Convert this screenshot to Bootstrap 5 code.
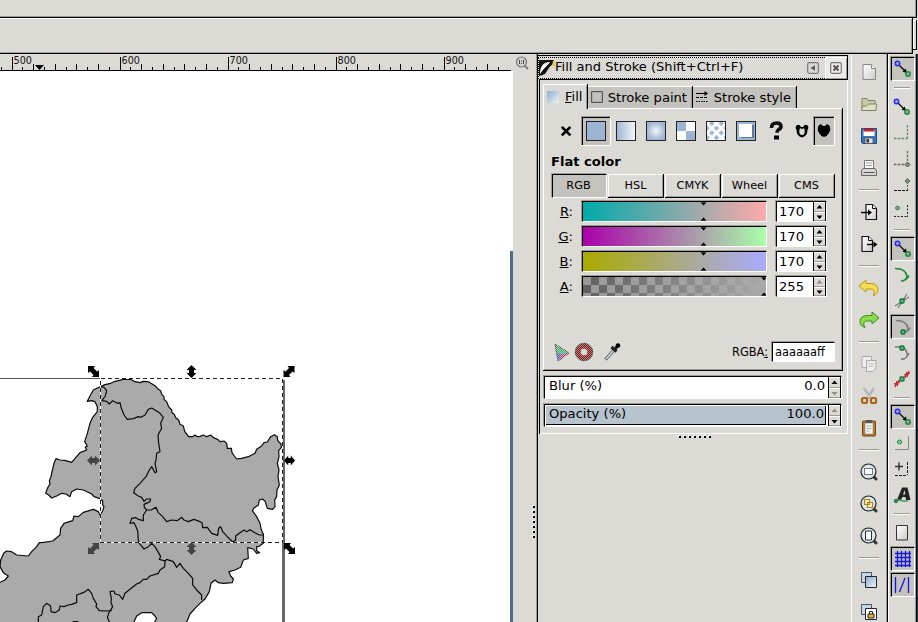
<!DOCTYPE html>
<html lang="en">
<head>
<meta charset="utf-8">
<title>Fill and Stroke</title>
<link href="https://cdn.jsdelivr.net/npm/bootstrap@5.3.0/dist/css/bootstrap.min.css" rel="stylesheet">
<style>
:root{--face:#dcdad5;--press:#c4c2bd;--dk:#9c9a91}
body{width:918px;height:622px;overflow:hidden;background:var(--face);color:#000;font:13.1px/16px "DejaVu Sans",sans-serif;white-space:nowrap}
svg{display:block;flex:none}
.menu-strip{height:18px;width:917px;border-bottom:1px solid #000;border-right:1px solid #000;box-shadow:inset -1px -1px var(--dk)}
.tool-strip{height:36px}
.tool-main{width:913px;border:solid #000;border-width:0 1px 1px 0;box-shadow:inset 0 1px #fff,inset -1px -1px var(--dk)}
.tool-end{width:4px;height:30px;margin-top:2px;border:solid #000;border-width:0 1px 1px 0;box-shadow:inset 1px 1px #fff}
.main-row{height:568px}
.main-row>*{flex:none}
.canvas-col{width:513px}
.gutter{width:23px}
.grip-v{margin:435px 0 0 19px}
.dock{width:313px;border-left:1px solid var(--dk);box-shadow:inset 1px 0 #000}
.dock-title{height:24px;margin:1px 0 0 1px;width:310px;border:solid #000;border-width:1px 1px 0 0;padding-top:1px}
.dots{border:1px dotted #000;border-width:1px 0 1px 1px;background:var(--face);height:22px}
.title-t{padding-bottom:2px;font-size:13.05px}
.title-back{margin-right:6px}
.close-b{width:22px;height:22px;background:#eeebe7;box-shadow:inset 1px 1px #fff,inset -1px -1px var(--dk);padding-right:1px}
.frame-in{margin-left:2px;width:309px;height:355px;border:solid #000;border-width:1px 0 0 1px;box-shadow:inset -1px -1px #fff;padding:4px 0 0 3px}
.tab-row{height:24px}
.tab-x{background:var(--press);height:22px;border-right:1px solid #000;box-shadow:inset 0 1px #fff,inset -1px 0 var(--dk)}
.tab-p{width:105px}
.tab-s{width:104px}
.tab-x svg{margin-left:3px}
.tab-x span{margin:2px 5px 0 auto}
.tab-on{background:var(--face);height:25px;width:45px;box-shadow:inset 1px 1px #fff,inset -1px 0 var(--dk);border-right:1px solid #000;z-index:1;padding-left:4px;gap:6px}
.book{width:300px;height:263px;border:solid #000;border-width:0 1px 1px 0;box-shadow:inset 1px 1px #fff,inset -1px -1px var(--dk);padding:8px 0 0 8px}
.sunk{background:var(--press);border:1px solid;border-color:#000 #fff #fff #000;box-shadow:-1px -1px var(--dk)}
.flat-h{margin-top:8px;padding-bottom:4px}
.modes{gap:1px;margin-left:1px}
.btn-m{width:56px;height:24px;font-size:11.3px;line-height:21px;text-align:center;border:solid #000;border-width:0 1px 1px 0;box-shadow:inset 1px 1px #fff,inset -1px -1px var(--dk);padding-top:1px}
.btn-m.on{background:var(--press);border:1px solid;border-color:#000 #fff #fff #000;box-shadow:-1px -1px var(--dk);padding:0 2px 0 0;width:55px}
.channel-list{padding-top:1px}
.ch{height:25px}
.ch-label{width:22px;text-align:right}
.well{border:1px solid;border-color:#000 #fff #fff #000;box-shadow:-1px -1px var(--dk);background:#fff}
.slide{width:185px;height:21px;margin-left:9px}
.slide.r{background:linear-gradient(90deg,#00aaaa,#ffaaaa)}
.slide.g{background:linear-gradient(90deg,#aa00aa,#aaffaa)}
.slide.b{background:linear-gradient(90deg,#aaaa00,#aaaaff)}
.num{width:51px;height:21px;margin-left:9px}
.num span{width:36px;padding-left:2px;line-height:19px}
.steps{width:13px;background:var(--face);border-left:1px solid #000}
.small-t{font-size:11.4px}
.pick-row{margin-top:42px}
.hex{width:63px;height:20px;padding-left:2px;line-height:18px;margin-left:4px}
.meter{height:23px;width:298px;margin:5px 0 0 1px}
.meter-bar{height:21px;line-height:18px;padding:0 3px 0 4px}
.meter-bar.full{background:#b7c4ce;border:solid #000;border-width:0 1px 1px 0;height:19px;margin:1px 2px 0 1px;padding:0 1px 0 3px;line-height:16px}
.grip-h{margin:1px 0 0 141px}
.cmd{width:39px;border-right:1px solid #000;box-shadow:inset -1px 0 var(--dk),inset 2px 0 var(--face),inset 3px 0 #fff;padding:2px 2px 0 4px}
.cmd>*,.snap>*{flex:none}
.cmd .it{height:32px}
.snap{width:29px;border-right:1px solid #000;box-shadow:inset 1px 0 #fff,inset -1px 0 var(--dk);padding-top:2px}
.snap .it{height:26px}
.snap .on{width:24px;height:24px;margin:1px 0 1px 1px}
.cut{height:12px;padding-top:5px}
.cut i{display:block;height:2px;border-top:1px solid var(--dk);border-bottom:1px solid #fff;width:20px}
.snap .cut i{width:16px}
.edge{width:1px;background:#1c3c58}
</style>
<script src="https://cdn.jsdelivr.net/npm/bootstrap@5.3.0/dist/js/bootstrap.bundle.min.js"></script>
</head>
<body>
<svg width="0" height="0" class="position-absolute">
<defs>
<linearGradient id="bl"><stop stop-color="#9cb5d3"/><stop offset="1" stop-color="#f4f7fb"/></linearGradient>
<linearGradient id="bd" x2="1" y2="1"><stop stop-color="#8eadd0"/><stop offset="1" stop-color="#eef3f9"/></linearGradient>
<linearGradient id="pg" x2="1" y2="1"><stop stop-color="#fff"/><stop offset="1" stop-color="#ccc"/></linearGradient>
<radialGradient id="rd"><stop stop-color="#f2f6fb"/><stop offset="1" stop-color="#9cb5d3"/></radialGradient>
<linearGradient id="fade"><stop stop-color="#aaa" stop-opacity="0"/><stop offset="1" stop-color="#aaa"/></linearGradient>
<pattern id="chk" width="16" height="16" patternUnits="userSpaceOnUse"><path fill="#999" d="M0 0h16v16H0z"/><path fill="#5f5f5f" d="M8 0h8v8H8zM0 8h8v8H0z"/></pattern>
<pattern id="dia" x="707" y="121" width="9.500" height="9.500" patternUnits="userSpaceOnUse"><path fill="#fff" d="M0 0h10v10H0z"/><path fill="#9cb5d3" d="M4.750 0L7 2.400 4.750 4.800 2.500 2.400zM0 4.800l2.300 2.400L0 9.500zM9.500 4.800v4.700L7.200 7.200z" stroke="#9cb5d3" stroke-width=".8"/></pattern>
<pattern id="dim" width="2" height="2" patternUnits="userSpaceOnUse"><path fill="#dcdad5" d="M0 0h1v1H0zM1 1h1v1H1z"/></pattern>
<symbol id="snapall" viewBox="0 0 18 18"><path d="M5 5l6.500 6.500" stroke="#000" stroke-width="1.300"/><path d="M13 13l-4.500-1.200 3.300-3.300z"/><circle cx="3.500" cy="3.500" r="2.200" fill="#a9a9f5" stroke="#2a2af0" stroke-width="1.500"/><circle cx="14" cy="14" r="2.200" fill="#8cb0b0" stroke="#1f8a35" stroke-width="1.500"/></symbol>
<symbol id="mag" viewBox="0 0 18 18"><path d="M13 13l3 3" stroke="#333" stroke-width="3" stroke-linecap="round"/><circle cx="8.500" cy="8.500" r="7.500" fill="#dce6ee" stroke="#222" stroke-width="1.200"/></symbol>
<symbol id="page" viewBox="0 0 18 18"><path d="M6 1.500h6.500l4 4v11H6z" fill="url(#pg)" stroke="#111" stroke-width="1.200"/><path d="M12.500 1.500v4h4" fill="#fff" stroke="#111"/></symbol>
<symbol id="pageout" viewBox="0 0 18 18"><path d="M2 1.500h6.500l4 4v11H2z" fill="url(#pg)" stroke="#111" stroke-width="1.200"/><path d="M8.500 1.500v4h4" fill="#fff" stroke="#111"/></symbol>
<path id="av" d="M0-6.500L5-1.500H2.500V1.500H5L0 6.500-5 1.500H-2.500V-1.500H-5Z"/>
<path id="ad" d="M-5.500-5.500H1.500L0-3.500 3.500 0 5.500-1.500V5.500H-1.500L0 3.500-3.500 0-5.500 1.500Z"/>
</defs>
</svg>
<div class="d-flex flex-column">
<div class="menu-strip"></div>
<div class="tool-strip d-flex"><div class="tool-main"></div><div class="tool-end"></div></div>
<main class="main-row d-flex">
<section class="canvas-col">
<svg width="513" height="568" viewBox="0 54 513 568" font-size="9.600">
<path fill="#dcdad5" d="M0 54h513v17H0z"/><path fill="#fff" d="M0 71h513v551H0z"/>
<g shape-rendering="crispEdges"><path fill="none" stroke="#000" d="M0 70.500h511M12.500 57v13M120.500 57v13M228.500 57v13M336.500 57v13M444.500 57v13"/><path id="ticks" fill="none" stroke="#000"/></g>
<path d="M35 65h9l-4.500 5z"/>
<g fill="#111"><text x="13.600" y="64">500</text><text x="121.600" y="64">600</text><text x="229.600" y="64">700</text><text x="337.600" y="64">800</text><text x="445.600" y="64">900</text></g>
<path fill="#4f6b88" d="M510 251h3v371h-3z"/>
<path fill="#666" d="M282 380h3v242h-3z"/><path stroke="#555" d="M0 378.500h101"/>
<g transform="translate(40 360) scale(.33333)" fill="none" stroke="#0a0a0a" stroke-width="3.600" stroke-linejoin="round">
<path fill="#aaa" d="M182 80L195 74 212 70 222 65 235 62 250 58 272 58 285 65 300 68 310 64 325 65 340 74 347 79 355 88 362 92 365 103 372 110 372 118 380 125 386 140 395 150 396 158 402 162 408 174 416 180 420 193 430 198 434 214 446 230 458 230 465 225 472 230 480 229 490 225 500 230 512 225 520 233 533 238 540 245 552 243 560 250 562 265 574 265 576 278 583 288 590 297 605 295 625 290 645 280 650 268 665 258 672 248 682 246 692 230 703 224 712 230 713 242 723 252 724 262 716 272 717 290 712 310 717 330 714 350 718 375 711 390 710 410 704 420 705 440 698 448 682 445 676 425 668 417 658 420 655 435 643 443 637 452 650 470 660 490 664 510 670 522 670 545 670 550 657 559 650 560 650 572 659 578 650 580 640 567 623 563 625 595 610 600 602 622 585 630 567 635 572 648 580 657 577 668 550 670 535 668 525 660 513 670 508 695 495 717 480 730 465 745 450 762 440 786 440 810-140 810-140 675-120 667-105 660-95 648-110 638-120 620-118 600-108 578-100 573-85 575-70 585-35 588-25 575-10 560-2 548 10 547 38 543 50 533 60 525 62 505 72 490 98 482 102 468 115 470 130 457 160 448 175 455 180 465 188 453 192 440 188 435 188 422 178 415 162 410 155 402 130 390 110 387 95 395 90 410 78 402 65 400 50 408 35 414 26 405 17 400 22 385 30 372 28 362 33 350 36 335 42 310 48 296 60 300 78 302 95 307 108 292 120 278 140 270 136 262 142 258 134 245 142 220 150 190 158 172 172 155 172 140 165 125 155 122 142 124 148 112 160 90 172 84Z"/>
<path d="M182 80L192 82 200 92 196 108 186 122 200 124 208 132 218 122 232 130 240 128 244 145 252 165 262 178 280 176 295 170 303 172 315 165 325 148 335 144 350 153 360 160 370 172 362 190 365 205 354 225 356 250 360 275 350 280 348 300 345 310 350 335 345 338 335 320 328 330 318 350 300 370 285 385 281 398 295 408 305 412 312 424 320 417 332 417 330 425 312 433 313 442 320 450"/>
<path d="M320 450L333 450 348 442 355 458 368 470 380 485 395 480 412 482 425 472 432 480 445 485 462 478 480 485 486 488 488 503 502 502 515 520 533 526 536 505 542 500 548 515 562 530 578 546 587 540 587 528 600 518 612 510 620 515 630 509 645 518 658 525 670 525"/>
<path d="M320 450L310 465 310 482 295 478 288 473 275 475 270 490 282 488 288 500 293 512 295 540 298 550 312 567 325 560 335 550 345 560 352 572 362 590 358 598 375 603 380 598 400 605 410 622 420 610 430 625 445 640 458 655 458 675 470 690 485 705 485 720"/>
<path d="M375 600L374 620 360 630 355 640 330 648 320 658 310 658 300 668 290 672 270 688 255 700 248 718 238 705 225 702 222 693 210 695 214 715 213 728 218 740 207 758 202 772 210 790M-5 790L-5 770 5 765 10 740 20 730 32 738 33 755 45 758 58 750 60 738 72 740 85 735 95 733 110 728 110 705 130 698 145 688 155 700 160 715 170 732 168 740 178 752 200 753 215 752M98 785H115"/>
<path fill="#fff" d="M280 790L290 768 305 758 335 758 342 765 350 775 342 790"/>
</g>
<g fill="none" shape-rendering="crispEdges"><path stroke="#fff" d="M100.500 378.500h182v164h-182z"/><path stroke="#222" stroke-dasharray="4 3" d="M100.500 378.500h182v164h-182z"/></g>
<use href="#av" x="191.500" y="371.500"/><use href="#ad" x="93.500" y="371.500"/><use href="#ad" transform="translate(289 371.500) scale(-1 1)"/><use href="#ad" x="289.500" y="548.500"/><use href="#av" transform="translate(289.500 460.500) rotate(90) scale(1 .85)"/>
<g fill="#444"><use href="#av" x="191.500" y="548.500"/><use href="#av" transform="translate(93.500 460.500) rotate(90)"/><use href="#ad" transform="translate(93.500 548.500) scale(-1 1)"/></g>
</svg>
</section>
<aside class="gutter"><svg width="23" height="16" viewBox="0 0 23 16"><circle cx="8.500" cy="8" r="5" fill="#d5d3cf" stroke="#777" stroke-width="1.200"/><path d="M12 12l3 3" stroke="#777" stroke-width="1.800"/><path d="M6.500 6v4M10.500 6v4M8.500 6.500v1M8.500 9v1" stroke="#444"/></svg>
<svg class="grip-v" width="4" height="34" viewBox="0 0 4 34"><path d="M1 0v33" stroke="#fff" stroke-width="2" stroke-dasharray="2 3"/><path d="M2 1v32" stroke="#000" stroke-width="2" stroke-dasharray="2 3"/></svg></aside>
<section class="dock">
<div class="dock-title"><div class="dots d-flex align-items-center">
<svg width="16" height="18" viewBox="0 0 16 18"><path fill="#111" d="M0 1h15L6 15l-6 2z"/><path fill="#fff" d="M1 15Q1 3 11 3L4 13z"/><path d="M2 16C5 10 9 8 14 3" stroke="#111" stroke-width="2.500" fill="none"/><path fill="#edc31c" d="M14 2l2 2v4l-3-2z"/></svg>
<span class="title-t flex-grow-1">Fill and Stroke (Shift+Ctrl+F)</span>
<svg width="12" height="12" viewBox="0 0 12 12" class="title-back"><rect x=".7" y=".7" width="10.600" height="10.600" rx="1.500" fill="none" stroke="#777" stroke-width="1.200"/><path d="M8 3.200v5.600L3.500 6z" fill="#555"/></svg>
<div class="close-b d-flex align-items-center justify-content-center"><svg width="12" height="12" viewBox="0 0 12 12"><rect x=".7" y=".7" width="10.600" height="10.600" rx="1.500" fill="none" stroke="#777" stroke-width="1.200"/><path d="M3.500 3.500l5 5M8.500 3.500l-5 5" stroke="#555" stroke-width="2"/></svg></div>
</div></div>
<div class="frame-in">
<div class="tab-row d-flex align-items-end">
<div class="tab-on d-flex align-items-center align-self-start position-relative"><svg width="12" height="12"><path fill="url(#bd)" d="M0 0h12v12H0z"/></svg><span><u>F</u>ill</span></div>
<div class="tab-x tab-p d-flex align-items-center"><svg width="12" height="12" viewBox="0 0 12 12"><path fill="none" stroke="#555" d="M.5.500h11v11H.5z"/><path fill="none" stroke="#aaa" d="M1.500 1.500h9v9h-9z"/></svg><span>Stroke paint</span></div>
<div class="tab-x tab-s d-flex align-items-center"><svg width="13" height="13" viewBox="0 0 13 13"><path d="M0 2.500h9" stroke="#000"/><path d="M8.500 0L12 2.500 8.500 5z"/><path d="M0 6.500h12" stroke="#000" stroke-dasharray="3 1"/><path d="M0 10.500h12" stroke="#000" stroke-dasharray="1.500 1"/></svg><span>Stroke style</span></div>
</div>
<div class="book">
<svg width="288" height="30" viewBox="551 116 288 30">
<path d="M561.800 126.800l8.600 8.600M570.400 126.800l-8.600 8.600" stroke="#000" stroke-width="2.600"/>
<g shape-rendering="crispEdges"><path fill="#c4c2bd" d="M582 117h28v28h-28zM814 117h20v28h-20z"/><path fill="none" stroke="#000" d="M582.500 145v-27.500H610M814.500 145v-27.500H834"/><path fill="none" stroke="#9c9a91" d="M581.500 145v-28.500H610M813.500 145v-28.500H834"/><path fill="none" stroke="#fff" d="M610.500 117v28.500H582M834.500 117v28.500H814"/>
<g stroke="#222" stroke-width="1.300"><path fill="#9cb5d3" d="M586.500 121.500h19v19h-19z"/><path fill="url(#bl)" d="M616.500 121.500h19v19h-19z"/><path fill="url(#rd)" d="M646.500 121.500h19v19h-19z"/><path fill="#fff" d="M676.500 121.500h19v19h-19z"/><path fill="url(#dia)" d="M706.500 121.500h19v19h-19z"/><path fill="#9cb5d3" d="M736.500 121.500h19v19h-19z"/></g>
<path fill="#9cb5d3" d="M677 122h9v9h-9zM686 131h9v9h-9z"/><path fill="#5f789a" d="M741 125h13v13h-13z"/><path fill="#fff" d="M739 124h13v13h-13z"/></g>
<path d="M771.500 128q0-5 5-5 4.500 0 4.500 3.500 0 2-2.500 3.200-1.500 1-1.500 3" fill="none" stroke="#111" stroke-width="3.600"/><path d="M774 135.500h5v4h-5z"/>
<path fill-rule="evenodd" d="M796 126q3-3 5 1h2q2-4 5-1 1 2-.5 4 0 6-5.500 7.500-5.500-1.500-5.500-7.500-1.500-2-.5-4zM799.500 129q-1 6 2.500 6t2.500-6q-2-2-2.500 1-.5-3-2.500-1z"/>
<path d="M818 127q2-5 5-1h2q3-4 5 1 1 3-1 6-2 3.500-5 4-3-.5-5-4-2-3-1-6z"/>
</svg>
<div class="fw-bold flat-h">Flat color</div>
<div class="modes d-flex"><div class="btn-m on">RGB</div><div class="btn-m">HSL</div><div class="btn-m">CMYK</div><div class="btn-m">Wheel</div><div class="btn-m">CMS</div></div>
<div class="channel-list" id="channels"></div>
<div class="pick-row d-flex align-items-center">
<svg width="181" height="22" viewBox="551 341 181 22">
<path fill="#39b36a" d="M555 344l14 9-11 8z"/><path fill="#d83a78" d="M569 353l-11 8 4-7z"/><path fill="#4b57d0" d="M556 353l6 1-4 7z"/><path fill="none" stroke="#444" d="M555 344l14 9-11 8z"/><path fill="url(#dim)" opacity=".7" d="M553 343h18v18h-18z"/>
<circle cx="584" cy="352" r="6" fill="none" stroke="#7d1a1a" stroke-width="5.500"/><circle cx="584" cy="352" r="8.700" fill="none" stroke="#333"/><path fill="url(#dim)" d="M575 343h18v18h-18z" opacity=".55"/>
<path d="M605.500 359.500l8-9" stroke="#555" stroke-width="3.200"/><path d="M606 359l7.500-8.500" stroke="#c9dbe6" stroke-width="1.600"/><path d="M611.500 347l5 4.500M614.500 349.500l4-4.500" stroke="#222" stroke-width="3.200"/><circle cx="618" cy="345.500" r="2.300"/>
</svg>
<span class="small-t">RGBA<u>:</u></span><div class="well hex small-t">aaaaaaff</div></div>
</div>
<div class="well meter d-flex"><div class="meter-bar flex-grow-1 d-flex justify-content-between"><span>Blur (%)</span><span>0.0</span></div><div class="steps" data-off="down" data-h="21"></div></div>
<div class="well meter d-flex"><div class="meter-bar full flex-grow-1 d-flex justify-content-between"><span>Opacity (%)</span><span>100.0</span></div><div class="steps" data-off="up" data-h="21"></div></div>
</div>
<svg class="grip-h" width="34" height="4" viewBox="0 0 34 4"><path d="M0 1h34" stroke="#fff" stroke-width="2" stroke-dasharray="2 3"/><path d="M1 2h33" stroke="#000" stroke-width="2" stroke-dasharray="2 3"/></svg>
</section>
<nav class="cmd d-flex flex-column align-items-center" id="cmd"></nav>
<nav class="snap d-flex flex-column align-items-center" id="snap"></nav>
<div class="edge"></div>
</main>
</div>
<script>
// Ruler: a short tick every 10 units, a longer one every 20
let d='';
for(let i=-1;i<46;i++){ if(((i%10)+10)%10===0) continue; const x=Math.floor(12+i*10.8)+.5; if(x<511) d+=`M${x} ${i%2?67:64}V70`; }
document.getElementById('ticks').setAttribute('d',d);

// Channel sliders
document.getElementById('channels').innerHTML=[['R','r',170],['G','g',170],['B','b',170],['A','a',255]].map(([n,c,v])=>{
 const x=c==='a'?181:120.5;
 return `<div class="ch d-flex align-items-center"><div class="ch-label"><u>${n}</u>:</div><div class="well slide ${c}"><svg width="183" height="19">${c==='a'?'<path fill="url(#chk)" d="M0 0h184v19H0z"/><path fill="url(#fade)" d="M0 0h184v19H0z"/>':''}<path d="M${x-3.5} 0h7l-3.500 4zM${x-3.5} 19h7l-3.500-4z" stroke="#ccc" stroke-width=".5"/></svg></div><div class="well num d-flex"><span>${v}</span><div class="steps" data-h="19" data-off="${c==='a'?'up':''}"></div></div></div>`}).join('');

// Spin buttons; the arrow at a limit is greyed out
document.querySelectorAll('.steps').forEach(e=>{
 const h=+e.dataset.h,m=(h-1)/2,col=k=>e.dataset.off===k?'#8e8c86':'#000';
 e.innerHTML=`<svg width="12" height="${h}"><path d="M0 .5h12M0 ${m+1.5}h12" stroke="#fff"/><path d="M0 ${m+.5}h12M0 ${h-.5}h12" stroke="#9c9a91"/><path d="M11.500 0v${h}" stroke="#000"/><path fill="${col('up')}" d="M2.500 ${m/2+2}h6l-3-3.500z"/><path fill="${col('down')}" d="M2.500 ${m*1.5}h6l-3 3.500z"/></svg>`;
});

const svg=(s,w=18)=>`<svg width="${w}" height="${w}" viewBox="0 0 ${w} ${w}">${s}</svg>`;
const sep='<div class="cut"><i></i></div>';
const arrow='M1 9l7-6v3.500h5q7 .5 7 6 0 4.500-5 6 2-3 1-5-1-1.500-3.500-1.500H8V15z';
const cmd=[
'<path d="M3 1.500h8.500l4 4v11H3z" fill="url(#pg)" stroke="#888"/><path d="M11.500 1.500v4h4" fill="#fff" stroke="#888"/>',
'<path d="M2 15V3.500h5l1 2h7V9" fill="#c6cba8" stroke="#7f8467"/><path d="M1.500 15.500l1-4.500h4l2-2h8l-.5 6.500z" fill="#dde0c4" stroke="#7f8467"/>',
'<path d="M1.500 1.500h15v15H3l-1.500-1z" fill="#3d74c0" stroke="#234a86"/><path fill="#fff" d="M3.500 2h11v7h-11z"/><path fill="#d31b1b" d="M3.500 2h11v2.500h-11z"/><path fill="#ddd" stroke="#444" stroke-width=".7" d="M5 11h8v5.500H5z"/><path fill="#333" d="M6.500 12h2.500v3.500H6.500z"/>',
'<path d="M4.500 10V1.500h9V10" fill="#fff" stroke="#777"/><path d="M6 4h6M6 6.500h6" stroke="#999"/><path d="M3 9.500h12l1.500 2.500v4.500h-15V12z" fill="#d6d5d1" stroke="#666"/><path d="M3.500 13.500h11" stroke="#555"/>',
0,
'<use href="#page"/><path d="M1 9.500h7" stroke="#000" stroke-width="1.400"/><path d="M8 6.500l4 3-4 3z"/>',
'<use href="#pageout"/><path d="M7 9.500h8" stroke="#000" stroke-width="1.400"/><path d="M13.500 6.500l4 3-4 3z"/>',
0,'U','R',0,
'<g fill="#eee" stroke="#aaa"><path d="M2 1.500h9.500v11H2z"/><path d="M6.500 5.500H16V13l-3 3.500H6.500z"/></g><path d="M8.500 9h5.500M8.500 11.500h5" stroke="#bbb"/>',
'<path d="M4 1l7 11M14 1L7 12" stroke="#888" stroke-width="2"/><path d="M4 1l7 11M14 1L7 12" stroke="#eee" stroke-width=".8"/><g fill="none" stroke="#a8651b" stroke-width="2.200"><rect x="2" y="11" width="5" height="5" rx="1.500"/><rect x="11" y="11" width="5" height="5" rx="1.500"/></g>',
'<rect x="2.500" y="2" width="13" height="15" rx="1" fill="#b87a2c" stroke="#6e4512"/><path d="M5 4h8v11H5z" fill="#f4f4f2" stroke="#888" stroke-width=".6"/><path d="M6 1h6v3H6z" fill="#555"/><path d="M6.500 7h5M6.500 9.500h5M6.500 12h3" stroke="#aaa"/>',
0,
'<use href="#mag"/><path d="M4.500 5.500h8v6h-8z" fill="#fff" stroke="#000" stroke-dasharray="1 1"/>',
'<use href="#mag"/><path d="M4.500 4.500h5v5h-5zM7.500 7.500h5v5h-5z" fill="#fff7d0" stroke="#b57f10" stroke-width="1.200"/>',
'<use href="#mag"/><path d="M5.500 4h6v9h-6z" fill="#fafafa" stroke="#333"/>',
0,
'<path d="M1.500 1.500h10v10h-10z" fill="#c5d5e4" stroke="#456"/><path d="M5.500 5.500h11v11h-11z" fill="url(#bd)" stroke="#223"/>',
'<path d="M1.500 1.500h10v10h-10z" fill="#c5d5e4" stroke="#456"/><path d="M5.500 5.500h11v11h-11z" fill="#fff" stroke="#223"/><path d="M8 11h6v4H8z" fill="#e7b72b" stroke="#222"/><path d="M9.500 11V8.500h3V11" fill="none" stroke="#222"/>'];
document.getElementById('cmd').innerHTML=cmd.map(c=>{
 if(!c) return sep;
 const s=c==='U'?svg(`<path d="${arrow}" fill="#f6dd55" stroke="#b8931c"/>`,22):c==='R'?svg(`<path transform="matrix(-1 0 0 1 22 0)" d="${arrow}" fill="#8bdc4a" stroke="#3f8a1c"/>`,22):svg(c);
 return `<div class="it d-flex align-items-center">${s}</div>`}).join('');

const A='!<use href="#snapall"/>', node=(x,y,f)=>`<path d="M${x} ${y-2.500}l2.500 2.500-2.500 2.500-2.500-2.500z" fill="#7a9a80" stroke="${f}"/>`;
const sq=(x,y)=>`<rect x="${x-2}" y="${y-2}" width="4" height="4" rx="1" fill="#5aa" stroke="#147a28" stroke-width="1.300"/>`;
const dash=c=>`<path d="M1 14.500h14M14.500 1v13" stroke="${c}" stroke-width="1.300" fill="none" stroke-dasharray="2.500 1.300"/>`;
const snap=[A,0,A.slice(1),dash('#5d9166'),dash('#666')+node(14.5,14.5,'#555'),
'<path d="M1 14.500h14" stroke="#111" stroke-dasharray="3 1"/><path d="M14.500 6v8" stroke="#666" stroke-dasharray="2 1"/>'+node(14.5,5,'#456b4a'),
'<path d="M1 14.500h14M14.500 3v12" stroke="#222" stroke-dasharray="2 1.500"/><circle cx="4.500" cy="6" r="1.800" fill="#7b9" stroke="#396b40"/>',
0,A,
'<path d="M2 2.500q11 0 12 8-1 4-5 4.500M16 9.500q-2 5-8 5.500" fill="none" stroke="#218a36" stroke-width="1.700"/>',
'<path d="M2 14L16 5M5 16L14 2" stroke="#777" stroke-width="1.300"/>'+sq(9,9),
'!<path d="M2 2.500q11 0 12 8-1 4-5 4.500M16 9.500q-2 5-8 5.500" fill="none" stroke="#777" stroke-width="1.400"/>'+sq(9,14),
'<path d="M2 3h7q5 2 5 8M16 9q-3 7-8 6" fill="none" stroke="#777" stroke-width="1.500"/>'+sq(9,4),
'<path d="M2 16L16 2" stroke="#888"/><path d="M2 17l2-6M4 16l2-6M12 8l2-6M14 7l2-6M1 14l6-2M11 5l6-2" stroke="#c3202c" stroke-width="1.300"/>'+sq(9,9),
0,A,
'<path d="M2 15.500h13.500V2" fill="none" stroke="#888"/><circle cx="6.500" cy="8" r="2" fill="#8c9" stroke="#218a36"/>',
'<path d="M2 6.500h8M6 2.500v8" stroke="#333" stroke-width="1.400"/><path d="M2 15.500h12" stroke="#222" stroke-dasharray="3 1"/><path d="M14.500 2v13" stroke="#222" stroke-dasharray="3 1"/>',
'<path fill="#222" fill-rule="evenodd" d="M4 14L9 1.500h5.500L17.500 14h-4.500l-.5-3H9.500l-1.500 3zM10 8.500h2.300L11.700 4z"/><path d="M3 15q3-2 6 0h6" fill="none" stroke="#4a9a58" stroke-width="1.300"/><circle cx="3" cy="15" r="1.800" fill="#3a74a8" stroke="#218a36"/>',
0,
'<path d="M3.500 1.500h11v14.500h-11z" fill="url(#pg)" stroke="#333"/>',
'!<path d="M1 3.500h16M1 7.500h16M1 11.500h16M1 15.500h16M3.500 1v16M7.500 1v16M11.500 1v16M15.500 1v16" stroke="#1414e8" stroke-width="1.300"/>',
'!<path d="M1.500 1v16M14.500 1v16M5.500 16l5.500-14" stroke="#1414e8" stroke-width="1.300"/>'];
document.getElementById('snap').innerHTML=snap.map(c=>{
 if(!c) return sep;
 const on=c[0]==='!';
 return `<div class="it d-flex align-items-center justify-content-center ${on?'on sunk':''}">${svg(on?c.slice(1):c)}</div>`}).join('');
</script>
</body>
</html>
